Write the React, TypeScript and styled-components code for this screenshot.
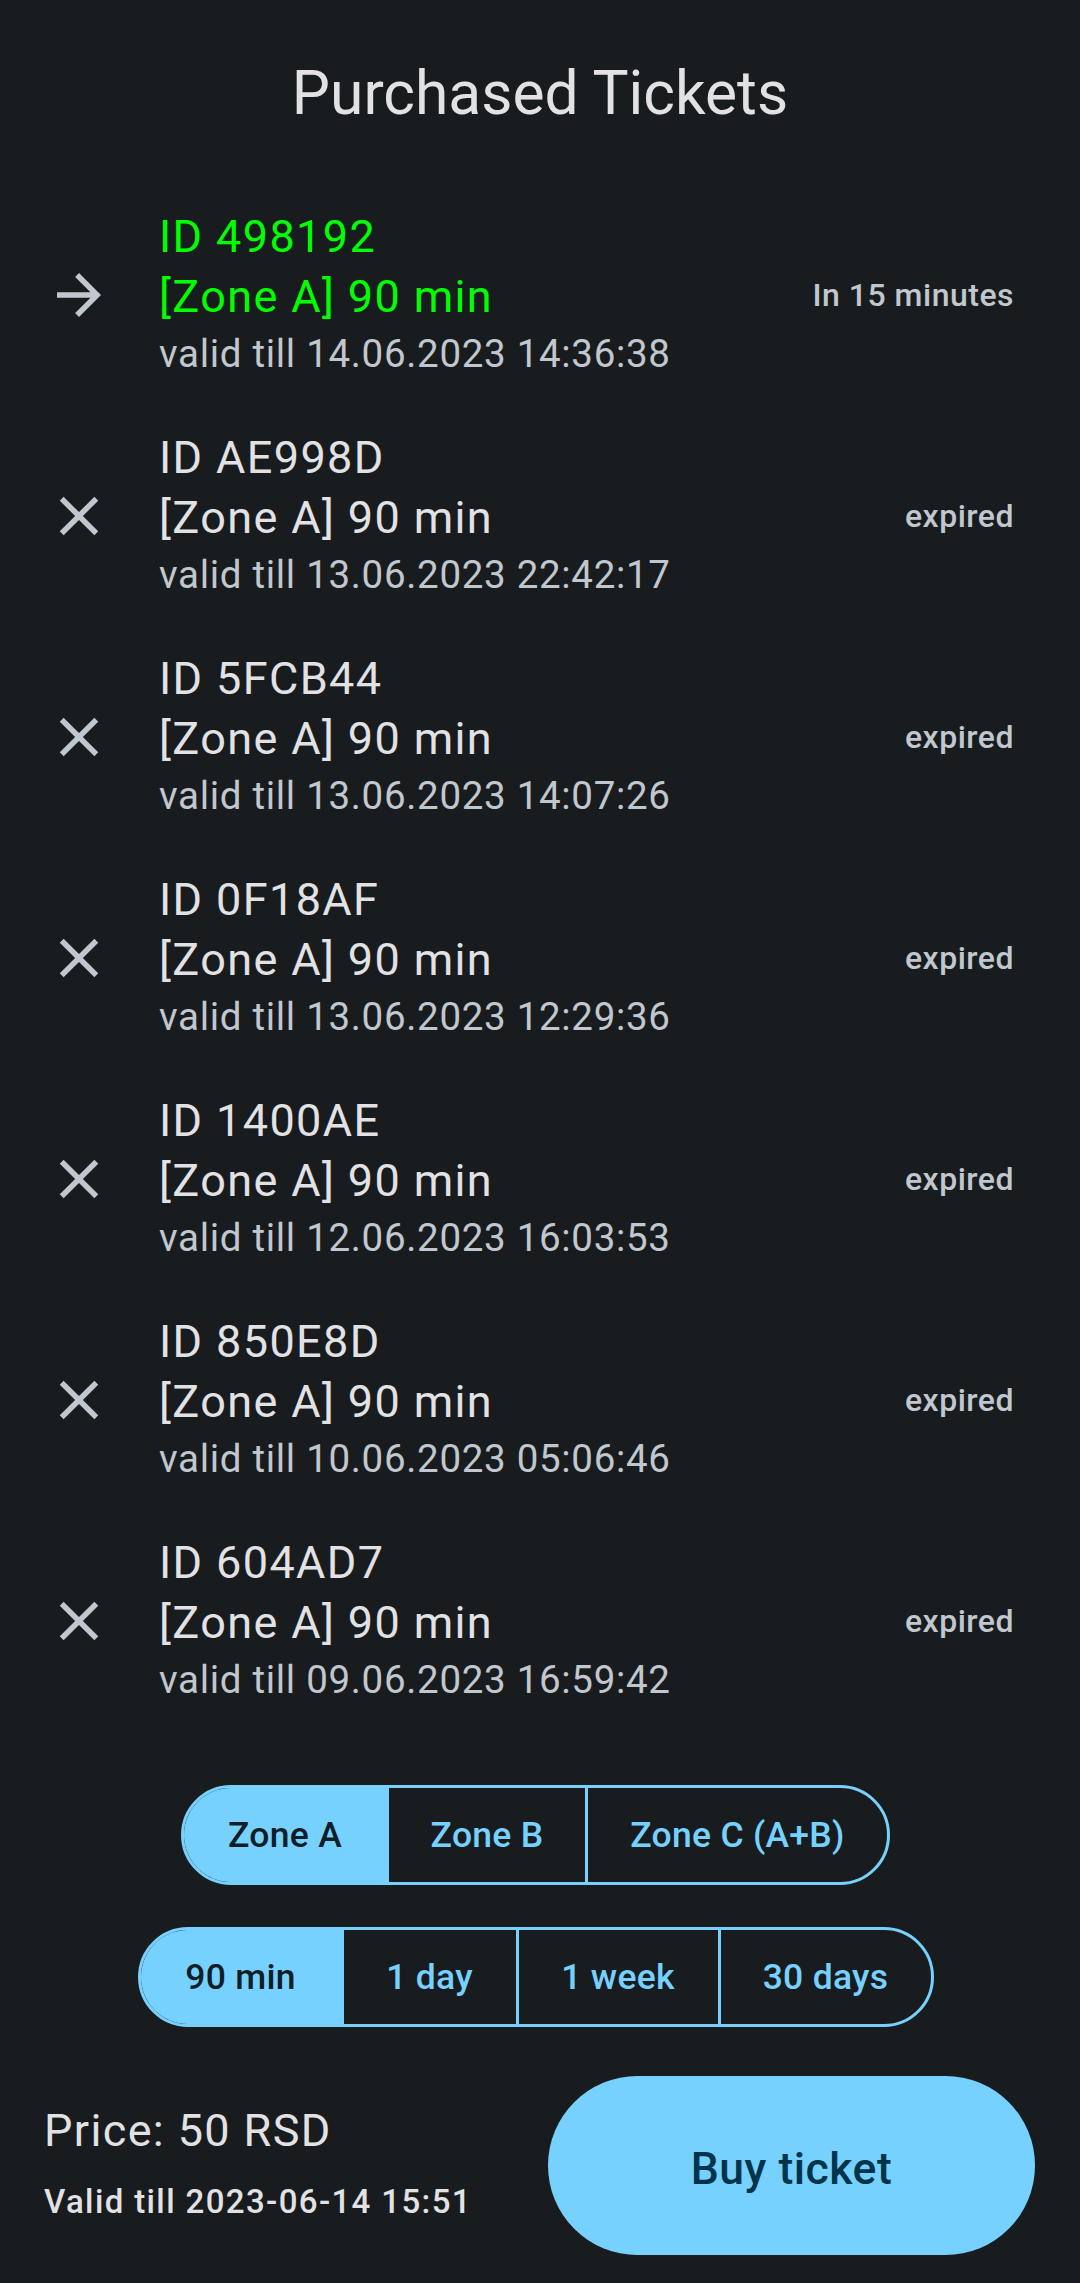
import React from "react";
import styled, { createGlobalStyle } from "styled-components";
import { MdArrowForward, MdClose } from "react-icons/md";

const GlobalStyle = createGlobalStyle`
  html, body {
    margin: 0;
    padding: 0;
    background: #191c1e;
  }
  body {
    font-family: Roboto, "Noto Sans", "Liberation Sans", sans-serif;
    -webkit-font-smoothing: antialiased;
  }
  * { box-sizing: border-box; }
`;

const Screen = styled.div`
  width: 1080px;
  min-height: 2283px;
  background: #191c1e;
  display: flex;
  flex-direction: column;
`;

const Title = styled.h1`
  margin: 55px 0 0;
  font-size: 60.5px;
  line-height: 77px;
  font-weight: 400;
  color: #e2e2e5;
  text-align: center;
  letter-spacing: 0;
`;

const List = styled.ul`
  list-style: none;
  margin: 52px 0 0;
  padding: 0;
`;

const Row = styled.li`
  display: flex;
  align-items: center;
  height: 221px;
  padding: 0 66px 0 46px;
`;

const IconBox = styled.div`
  width: 66px;
  height: 66px;
  flex-shrink: 0;
  display: flex;
  align-items: center;
  justify-content: center;
  color: #c1c7ce;
`;

const Texts = styled.div`
  flex: 1;
  margin-left: 47px;
  display: flex;
  flex-direction: column;
`;

const MainLine = styled.div<{ $active: boolean }>`
  font-size: 45px;
  line-height: 59.5px;
  letter-spacing: 1.375px;
  color: ${(p) => (p.$active ? "#00ff00" : "#e2e2e5")};
  white-space: nowrap;
`;

const Supporting = styled.div`
  font-size: 38.5px;
  line-height: 55.7px;
  letter-spacing: 0.69px;
  color: #c1c7ce;
  white-space: nowrap;
`;

const Trailing = styled.div`
  font-size: 32px;
  font-weight: 500;
  letter-spacing: 0.5px;
  color: #c1c7ce;
  white-space: nowrap;
`;

const SegRow = styled.div<{ $mt: number }>`
  display: flex;
  justify-content: center;
  margin-top: ${(p) => p.$mt}px;
  padding-right: 9px;
`;

const Segmented = styled.div`
  display: inline-flex;
  height: 100px;
  border: 3px solid #76d1ff;
  border-radius: 50px;
  overflow: hidden;
`;

const SegItem = styled.button<{ $w: number; $selected: boolean; $first: boolean }>`
  width: ${(p) => p.$w}px;
  height: 100%;
  border: none;
  border-left: ${(p) => (p.$first ? "none" : "3px solid #76d1ff")};
  margin: 0;
  padding: 0;
  background: ${(p) => (p.$selected ? "#76d1ff" : "transparent")};
  color: ${(p) => (p.$selected ? "#0f1d26" : "#76d1ff")};
  font-family: Roboto, "Noto Sans", sans-serif;
  font-size: 35.5px;
  font-weight: 500;
  letter-spacing: 0.275px;
  display: flex;
  align-items: center;
  justify-content: center;
  box-sizing: content-box;
`;

const BottomRow = styled.div`
  display: flex;
  align-items: center;
  justify-content: space-between;
  margin-top: 49px;
  padding: 0 45px 0 44px;
`;

const PriceCol = styled.div`
  display: flex;
  flex-direction: column;
  gap: 20px;
  padding-bottom: 7px;
`;

const Price = styled.div`
  font-size: 45px;
  line-height: 59px;
  letter-spacing: 1.375px;
  color: #e2e2e5;
`;

const ValidTill = styled.div`
  font-size: 33px;
  line-height: 44px;
  font-weight: 500;
  letter-spacing: 1.375px;
  color: #e2e2e5;
`;

const BuyButton = styled.button`
  width: 487px;
  height: 179px;
  border: none;
  border-radius: 90px;
  background: #76d1ff;
  color: #00344a;
  font-family: Roboto, "Noto Sans", sans-serif;
  font-size: 44.5px;
  font-weight: 500;
  letter-spacing: 0.5px;
  padding: 7px 0 0;
  display: flex;
  align-items: center;
  justify-content: center;
`;

type Ticket = { id: string; valid: string; status: string; active?: boolean };

const tickets: Ticket[] = [
  { id: "498192", valid: "14.06.2023 14:36:38", status: "In 15 minutes", active: true },
  { id: "AE998D", valid: "13.06.2023 22:42:17", status: "expired" },
  { id: "5FCB44", valid: "13.06.2023 14:07:26", status: "expired" },
  { id: "0F18AF", valid: "13.06.2023 12:29:36", status: "expired" },
  { id: "1400AE", valid: "12.06.2023 16:03:53", status: "expired" },
  { id: "850E8D", valid: "10.06.2023 05:06:46", status: "expired" },
  { id: "604AD7", valid: "09.06.2023 16:59:42", status: "expired" },
];

const zones = [
  { label: "Zone A", w: 202 },
  { label: "Zone B", w: 196 },
  { label: "Zone C (A+B)", w: 299 },
];

const durations = [
  { label: "90 min", w: 200 },
  { label: "1 day", w: 172 },
  { label: "1 week", w: 199 },
  { label: "30 days", w: 210 },
];

export default function App() {
  return (
    <Screen>
      <GlobalStyle />
      <Title>Purchased Tickets</Title>
      <List>
        {tickets.map((t) => (
          <Row key={t.id}>
            <IconBox>
              {t.active ? <MdArrowForward size={66} /> : <MdClose size={66} />}
            </IconBox>
            <Texts>
              <MainLine $active={!!t.active}>ID {t.id}</MainLine>
              <MainLine $active={!!t.active}>[Zone A] 90 min</MainLine>
              <Supporting>valid till {t.valid}</Supporting>
            </Texts>
            <Trailing>{t.status}</Trailing>
          </Row>
        ))}
      </List>
      <SegRow $mt={54}>
        <Segmented>
          {zones.map((z, i) => (
            <SegItem key={z.label} $w={z.w} $selected={i === 0} $first={i === 0}>
              {z.label}
            </SegItem>
          ))}
        </Segmented>
      </SegRow>
      <SegRow $mt={42}>
        <Segmented>
          {durations.map((d, i) => (
            <SegItem key={d.label} $w={d.w} $selected={i === 0} $first={i === 0}>
              {d.label}
            </SegItem>
          ))}
        </Segmented>
      </SegRow>
      <BottomRow>
        <PriceCol>
          <Price>Price: 50 RSD</Price>
          <ValidTill>Valid till 2023-06-14 15:51</ValidTill>
        </PriceCol>
        <BuyButton>Buy ticket</BuyButton>
      </BottomRow>
    </Screen>
  );
}
